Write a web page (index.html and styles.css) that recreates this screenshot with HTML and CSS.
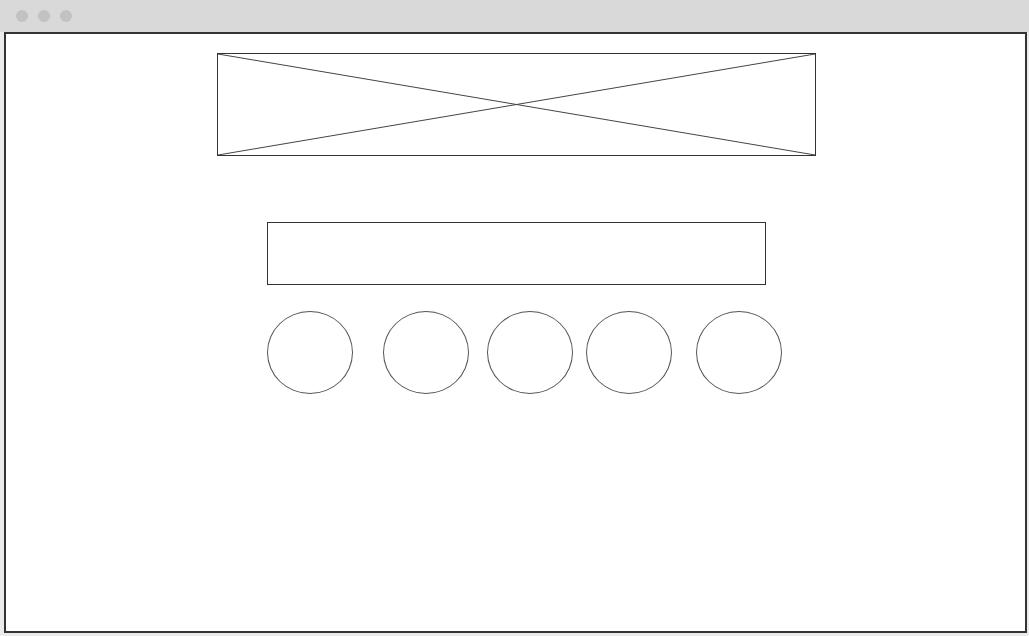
FILE: index.html
```html
<!DOCTYPE html>
<html lang="en">
<head>
  <meta charset="UTF-8" />
  <title>Wireframe</title>
  <link rel="stylesheet" href="styles.css">
</head>
<body>

  <!-- Window chrome -->
  <div class="titlebar">
    <span class="dot"></span>
    <span class="dot"></span>
    <span class="dot"></span>
  </div>

  <div class="window">
    <div class="banner">
      <svg viewBox="0 0 100 100" preserveAspectRatio="none">
        <line x1="0" y1="0" x2="100" y2="100" vector-effect="non-scaling-stroke" />
        <line x1="0" y1="100" x2="100" y2="0" vector-effect="non-scaling-stroke" />
      </svg>
    </div>

    <div class="input-box"></div>

    <div class="circles">
      <div class="circle"></div>
      <div class="circle c2"></div>
      <div class="circle c3"></div>
      <div class="circle c4"></div>
      <div class="circle c5"></div>
    </div>
  </div>

</body>
</html>
```

FILE: styles.css
```css
* {
  box-sizing: border-box;
}

body {
  margin: 0;
  background: #ebebeb;
  font-family: 'Liberation Sans', sans-serif;
}

.titlebar {
  height: 32px;
  background: #d9d9d9;
  display: flex;
  align-items: center;
  gap: 10px;
  padding-left: 16px;
}

.dot {
  width: 12px;
  height: 12px;
  border-radius: 50%;
  background: #c2c2c2;
}

.window {
  margin: 0 2px 0 4px;
  height: 601px;
  border: 2px solid #333;
  background: #fff;
  padding: 19px 0 0 2px;
}

.content {
  width: 599px;
  margin: 0 auto;
}

.banner {
  width: 599px;
  height: 103px;
  margin: 0 auto;
  border: 1px solid #333;
}

.banner svg {
  display: block;
  width: 100%;
  height: 100%;
}

.banner line {
  stroke: #444;
  stroke-width: 1;
}

.input-box {
  width: 499px;
  height: 63px;
  margin: 66px auto 0;
  border: 1px solid #333;
}

/* row sits flush with the input box's left edge */
.circles {
  width: 499px;
  margin: 26px auto 0;
  display: flex;
}

.circle {
  width: 86px;
  height: 83px;
  border: 1px solid #555;
  border-radius: 50%;
  flex-shrink: 0;
}

.c2 { margin-left: 30px; }
.c3 { margin-left: 18px; }
.c4 { margin-left: 13px; }
.c5 { margin-left: 24px; }
```
